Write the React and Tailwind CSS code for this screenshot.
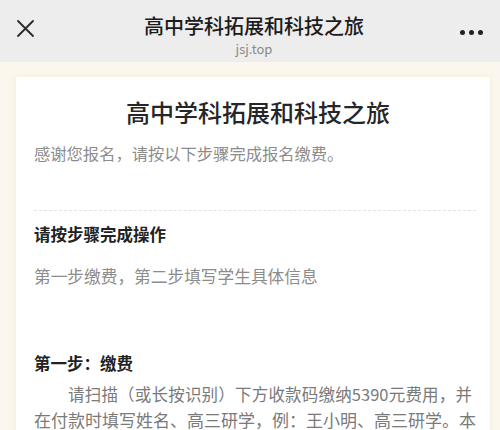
import React from 'react';

const font = { fontFamily: '"Noto Sans CJK SC", "Noto Sans", sans-serif' };

const App = () => {
  return (
    <div className="w-[500px] h-[430px] overflow-hidden bg-[#fcf7ee]" style={font}>
      {/* top bar */}
      <div className="relative h-[62px] bg-[#ededed] flex flex-col items-center">
        <div className="absolute left-[16px] top-[19px]">
          <svg width="19" height="19" viewBox="0 0 19 19" fill="none" stroke="#2a2a2a" strokeWidth="1.8" strokeLinecap="round">
            <path d="M2 2 L17 17 M17 2 L2 17" />
          </svg>
        </div>
        <div className="absolute right-[17px] top-[30px] flex gap-[4px]">
          <span className="w-[5px] h-[5px] rounded-full bg-[#222]" />
          <span className="w-[5px] h-[5px] rounded-full bg-[#222]" />
          <span className="w-[5px] h-[5px] rounded-full bg-[#222]" />
        </div>
        <div className="pl-[8px] mt-[14px] text-[20px] leading-[24px] font-medium text-[#1b1b1b]">高中学科拓展和科技之旅</div>
        <div className="pl-[8px] mt-[3px] text-[13px] leading-[16px] text-[#8a8a8a]">jsj.top</div>
      </div>

      {/* card */}
      <div className="ml-4 mt-[15px] w-[474px] h-[400px] overflow-hidden bg-white pl-[18px] pr-[14px] pt-[18px] shadow-[0_0_6px_rgba(240,225,200,0.6)]">
        <h1 className="text-center pl-[6px] text-[24px] leading-[34px] font-medium text-[#262626]">高中学科拓展和科技之旅</h1>
        <p className="mt-[11px] text-[16.3px] leading-[26px] text-[#8c8c8c]">感谢您报名，请按以下步骤完成报名缴费。</p>
        <div className="mt-[44px] border-t border-dashed border-[#e2e2e2]" />
        <h2 className="mt-[10px] text-[16.5px] leading-[26px] font-bold text-[#222]">请按步骤完成操作</h2>
        <p className="mt-[16px] text-[16.7px] leading-[26px] text-[#8c8c8c]">第一步缴费，第二步填写学生具体信息</p>
        <h2 className="mt-[61px] text-[16.5px] leading-[26px] font-bold text-[#222]">第一步：缴费</h2>
        <div className="mt-[6px] pr-[4px] leading-[25px] text-[#7a7a7a]">
          <p className="whitespace-nowrap text-[16.5px] indent-[34px] text-justify [text-align-last:justify]">请扫描（或长按识别）下方收款码缴纳5390元费用，并</p>
          <p className="whitespace-nowrap text-[17px] text-justify [text-align-last:justify]">在付款时填写姓名、高三研学，例：王小明、高三研学。本</p>
          <p className="text-[17px]">次研学费用包含往返交通、食宿及保险等全部费用。</p>
        </div>
      </div>
    </div>
  );
};

export default App;
